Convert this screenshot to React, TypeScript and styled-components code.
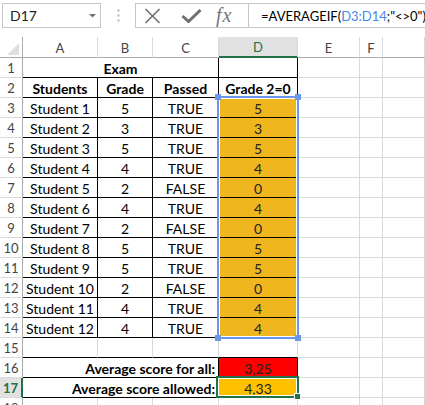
import React from "react";
import styled, { createGlobalStyle } from "styled-components";

const GRID = "#d9d9d9";
const BLACK = "#000";
const HEAD_LINE = "#ababab";
const HEAD_SEP = "#dadada";
const GREEN = "#217346";
const BLUE = "#6a97ea";

const GlobalStyle = createGlobalStyle`
  html, body { margin: 0; padding: 0; background: #fff; overflow: hidden; }
  body { font-family: Lato, "Liberation Sans", sans-serif; color: #000; }
`;

const Page = styled.div`
  width: 425px;
  height: 405px;
  overflow: hidden;
`;

/* ---------- formula bar ---------- */

const FormulaBar = styled.div`
  height: 37px;
  box-sizing: border-box;
  padding-top: 3px;
  display: flex;
  align-items: flex-start;
`;

const NameBox = styled.div`
  margin-left: 2px;
  width: 99px;
  height: 25px;
  box-sizing: border-box;
  border: 1px solid #c6c6c6;
  display: flex;
  align-items: center;
  justify-content: space-between;
  padding: 0 3px 0 7px;
  font-size: 14px;
  color: #222;
`;

const Grip = styled.div`
  width: 34px;
  height: 25px;
  display: flex;
  align-items: center;
  justify-content: center;
`;

const ButtonsBox = styled.div`
  width: 113px;
  height: 25px;
  box-sizing: border-box;
  border: 1px solid #c6c6c6;
  border-right: none;
  display: flex;
  align-items: center;
  padding-left: 8px;
  gap: 20px;
`;

const Fx = styled.span`
  font-family: "Liberation Serif", serif;
  font-style: italic;
  font-size: 20px;
  color: #777;
  margin-left: -6px;
  letter-spacing: 1px;
`;

const FormulaInput = styled.div`
  flex: 1;
  height: 25px;
  box-sizing: border-box;
  border: 1px solid #c6c6c6;
  border-right: none;
  display: flex;
  align-items: center;
  padding-left: 12px;
  font-size: 13px;
  white-space: nowrap;
  overflow: hidden;
`;

const Ref = styled.span`
  color: #4a86e8;
`;

/* ---------- sheet ---------- */

const SheetWrap = styled.div`
  position: relative;
`;

const Sheet = styled.div`
  display: grid;
  grid-template-columns: 23px 75px 55px 66px 79px 62px 23px 1fr;
  grid-auto-rows: 20px;
  grid-template-rows: 21px;
`;

const Corner = styled.div`
  box-sizing: border-box;
  border-right: 1px solid ${HEAD_LINE};
  border-bottom: 1px solid ${HEAD_LINE};
  display: flex;
  align-items: flex-end;
  justify-content: flex-end;
  padding: 0 3px 2px 0;
`;

const ColHead = styled.div<{ $active?: boolean }>`
  box-sizing: border-box;
  display: flex;
  align-items: center;
  justify-content: center;
  font-size: 13px;
  padding-top: 1px;
  color: ${(p) => (p.$active ? GREEN : "#444")};
  background: ${(p) => (p.$active ? "#e1e1e1" : "#fff")};
  border-right: 1px solid ${HEAD_SEP};
  border-bottom: ${(p) => (p.$active ? `2px solid ${GREEN}` : `1px solid ${HEAD_LINE}`)};
`;

const RowHead = styled.div<{ $active?: boolean }>`
  box-sizing: border-box;
  display: flex;
  align-items: center;
  justify-content: center;
  font-size: 13px;
  color: ${(p) => (p.$active ? GREEN : "#444")};
  font-weight: ${(p) => (p.$active ? 700 : 400)};
  background: ${(p) => (p.$active ? "#e1e1e1" : "#fff")};
  border-bottom: 1px solid ${HEAD_SEP};
  border-right: ${(p) => (p.$active ? `2px solid ${GREEN}` : `1px solid ${HEAD_LINE}`)};
`;

const Cell = styled.div<{
  $span: number;
  $align: string;
  $bold?: boolean;
  $bg?: string;
  $right: string;
  $bottom: string;
}>`
  grid-column: span ${(p) => p.$span};
  box-sizing: border-box;
  display: flex;
  align-items: center;
  justify-content: ${(p) => p.$align};
  padding: 1px 3px 0;
  font-size: 14px;
  line-height: 19px;
  white-space: nowrap;
  font-weight: ${(p) => (p.$bold ? 700 : 400)};
  background: ${(p) => p.$bg || "#fff"};
  color: ${(p) => (p.$bg ? "#222" : "#000")};
  border-right: 1px solid ${(p) => p.$right};
  border-bottom: 1px solid ${(p) => p.$bottom};
`;

const RangeMark = styled.div`
  position: absolute;
  left: 217px;
  top: 59px;
  width: 82px;
  height: 243px;
  box-sizing: border-box;
  border: 2px solid ${BLUE};
  box-shadow: inset 0 0 0 1px #fff;
  pointer-events: none;
`;

const Handle = styled.div<{ $x: "left" | "right"; $y: "top" | "bottom" }>`
  position: absolute;
  ${(p) => p.$x}: -4px;
  ${(p) => p.$y}: -4px;
  width: 6px;
  height: 6px;
  background: ${BLUE};
`;

const ActiveCell = styled.div`
  position: absolute;
  left: 216px;
  top: 339px;
  width: 83px;
  height: 22px;
  box-sizing: border-box;
  border: 2px solid ${GREEN};
  box-shadow: inset 0 0 0 1px #fff;
`;

const FillHandle = styled.div`
  position: absolute;
  right: -4px;
  bottom: -4px;
  width: 5px;
  height: 5px;
  background: ${GREEN};
  border: 1px solid #fff;
`;

type CellDef = {
  text?: string;
  span?: number;
  align?: "flex-start" | "center" | "flex-end";
  bold?: boolean;
  bg?: string;
  right?: string;
  bottom?: string;
};

const boxed = (text: string, extra: Partial<CellDef> = {}): CellDef => ({
  text,
  align: "center",
  right: BLACK,
  bottom: BLACK,
  ...extra,
});

const blanks = (n: number): CellDef[] => Array.from({ length: n }, () => ({}));

const students: [string, number, string, number][] = [
  ["Student 1", 5, "TRUE", 5],
  ["Student 2", 3, "TRUE", 3],
  ["Student 3", 5, "TRUE", 5],
  ["Student 4", 4, "TRUE", 4],
  ["Student 5", 2, "FALSE", 0],
  ["Student 6", 4, "TRUE", 4],
  ["Student 7", 2, "FALSE", 0],
  ["Student 8", 5, "TRUE", 5],
  ["Student 9", 5, "TRUE", 5],
  ["Student 10", 2, "FALSE", 0],
  ["Student 11", 4, "TRUE", 4],
  ["Student 12", 4, "TRUE", 4],
];

const rows: CellDef[][] = [
  [
    { text: "Exam", span: 3, bold: true, align: "center", right: BLACK, bottom: BLACK },
    { right: BLACK, bottom: BLACK },
    ...blanks(3),
  ],
  [
    boxed("Students", { bold: true }),
    boxed("Grade", { bold: true }),
    boxed("Passed", { bold: true }),
    boxed("Grade 2=0", { bold: true }),
    ...blanks(3),
  ],
  ...students.map(([name, grade, passed, adj]) => [
    boxed(name),
    boxed(String(grade)),
    boxed(passed),
    boxed(String(adj), { bg: "#efb71d" }),
    ...blanks(3),
  ]),
  [{ bottom: BLACK }, { bottom: BLACK }, { bottom: BLACK }, { bottom: BLACK }, ...blanks(3)],
  [
    { text: "Average score for all:", span: 3, bold: true, align: "flex-end", right: BLACK, bottom: BLACK },
    boxed("3,25", { bg: "#ff0000" }),
    ...blanks(3),
  ],
  [
    { text: "Average score allowed:", span: 3, bold: true, align: "flex-end", right: BLACK, bottom: BLACK },
    boxed("4,33", { bg: "#ffc000" }),
    ...blanks(3),
  ],
  blanks(7),
];

// G is scrolled mostly out of view, so its letter isn't shown
const letters = ["A", "B", "C", "D", "E", "F", ""];

export default function App() {
  return (
    <Page>
      <GlobalStyle />
      <FormulaBar>
        <NameBox>
          <span>D17</span>
          <svg width="9" height="5" viewBox="0 0 9 5">
            <polygon points="1,1 8,1 4.5,4.5" fill="#6f6f6f" />
          </svg>
        </NameBox>
        <Grip>
          <svg width="3" height="13" viewBox="0 0 3 13">
            <rect x="0.5" y="0.5" width="2" height="2" fill="#b4b4b4" />
            <rect x="0.5" y="5.5" width="2" height="2" fill="#b4b4b4" />
            <rect x="0.5" y="10.5" width="2" height="2" fill="#b4b4b4" />
          </svg>
        </Grip>
        <ButtonsBox>
          <svg width="17" height="16" viewBox="0 0 17 16">
            <path d="M1.5 1 L15.5 15 M15.5 1 L1.5 15" stroke="#707070" strokeWidth="1.6" />
          </svg>
          <svg width="21" height="14" viewBox="0 0 21 14">
            <path d="M1.5 7 L7.5 12.5 L19.5 1" stroke="#707070" strokeWidth="3" fill="none" />
          </svg>
          <Fx>fx</Fx>
        </ButtonsBox>
        <FormulaInput>
          =AVERAGEIF(<Ref>D3:D14</Ref>;"&lt;&gt;0")
        </FormulaInput>
      </FormulaBar>

      <SheetWrap>
        <Sheet>
          <Corner>
            <svg width="12" height="12" viewBox="0 0 12 12">
              <polygon points="12,0 12,12 0,12" fill="#dfdfdf" />
            </svg>
          </Corner>
          {letters.map((l, i) => (
            <ColHead key={i} $active={l === "D"}>
              {l}
            </ColHead>
          ))}
          {rows.map((cells, i) => (
            <React.Fragment key={i}>
              <RowHead $active={i === 16}>{i + 1}</RowHead>
              {cells.map((c, j) => (
                <Cell
                  key={j}
                  $span={c.span || 1}
                  $align={c.align || "center"}
                  $bold={c.bold}
                  $bg={c.bg}
                  $right={c.right || GRID}
                  $bottom={c.bottom || GRID}
                >
                  {c.text}
                </Cell>
              ))}
            </React.Fragment>
          ))}
        </Sheet>

        <RangeMark>
          <Handle $x="left" $y="top" />
          <Handle $x="right" $y="top" />
          <Handle $x="left" $y="bottom" />
          <Handle $x="right" $y="bottom" />
        </RangeMark>
        <ActiveCell>
          <FillHandle />
        </ActiveCell>
      </SheetWrap>
    </Page>
  );
}
